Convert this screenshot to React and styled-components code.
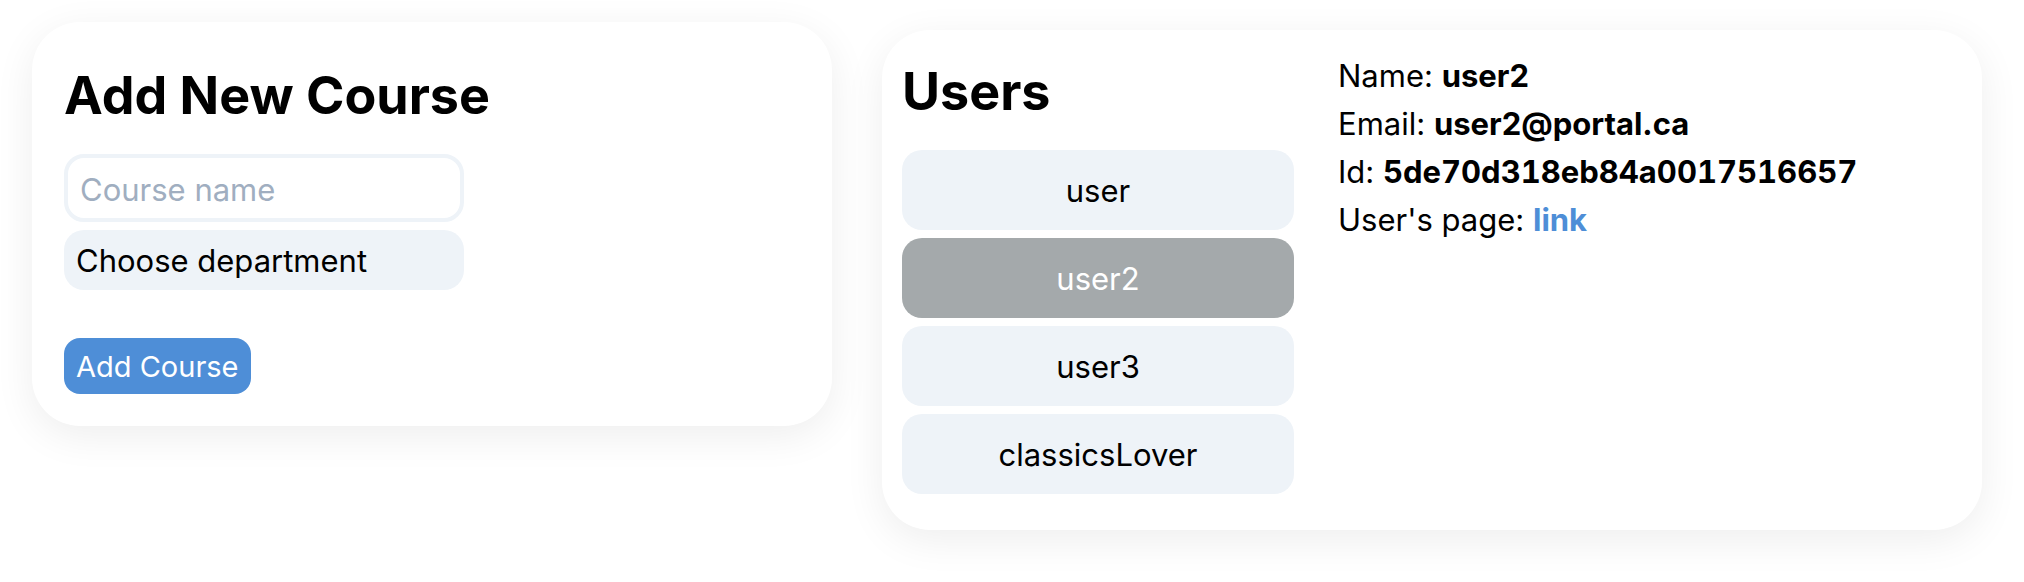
import React, { useState } from "react";
import styled, { createGlobalStyle } from "styled-components";

const Global = createGlobalStyle`
  *, *::before, *::after { box-sizing: border-box; }
  body {
    margin: 0;
    background: #fff;
    color: #000;
    font: 31px/48px Inter, "Liberation Sans", sans-serif;
  }
`;

const Page = styled.main`
  display: grid;
  grid-template-columns: minmax(0, 8fr) minmax(0, 11fr);
  align-items: start;
  gap: 50px;
  padding: 22px 42px 52px 32px;
`;

const Card = styled.section`
  background: #fff;
  border-radius: 48px;
  box-shadow: 0 10px 40px rgba(0, 0, 0, 0.07);
`;

const CourseCard = styled(Card)`
  padding: 34px 32px 32px;
`;

const UsersCard = styled(Card)`
  display: flex;
  gap: 44px;
  margin-top: 8px;
  padding: 22px 20px 36px;
`;

const Title = styled.h1`
  margin: 0 0 18px;
  font-size: 52px;
  line-height: 80px;
  font-weight: 700;
`;

const CourseForm = styled.form`
  display: flex;
  flex-direction: column;
  align-items: flex-start;
  gap: 8px;
`;

const TextField = styled.input`
  width: 400px;
  max-width: 100%;
  height: 68px;
  padding: 2px 12px 0;
  border: 4px solid #eef3f8;
  border-radius: 20px;
  font: inherit;
  &::placeholder { color: #a0aec0; opacity: 1; }
`;

const Select = styled.select`
  appearance: none;
  width: 400px;
  max-width: 100%;
  height: 60px;
  padding: 2px 12px 0;
  border: 0;
  border-radius: 20px;
  background: #eef3f8;
  color: #000;
  font: inherit;
`;

const SubmitButton = styled.button`
  height: 56px;
  margin-top: 40px;
  padding: 2px 12px 0;
  border: 0;
  border-radius: 16px;
  background: #4e8ed7;
  color: #fff;
  font: inherit;
  font-size: 29px;
`;

const UserColumn = styled.div`
  flex: 0 0 392px;
`;

const UserList = styled.div`
  display: flex;
  flex-direction: column;
  gap: 8px;
`;

const UserButton = styled.button`
  height: 80px;
  padding: 2px 12px 0;
  border: 0;
  border-radius: 20px;
  background: ${({ $active }) => ($active ? "#a4a9ab" : "#eef3f8")};
  color: ${({ $active }) => ($active ? "#fff" : "#000")};
  font: inherit;
`;

const Details = styled.div`
  min-width: 0;
`;

const UserId = styled.strong`
  font-variant-numeric: tabular-nums;
`;

const Link = styled.a`
  color: #4e8ed7;
  font-weight: 700;
  text-decoration: none;
`;

const users = ["user", "user2", "user3", "classicsLover"];

export default function App() {
  const [selected, setSelected] = useState("user2");
  return (
    <>
      <Global />
      <Page>
        <CourseCard>
          <Title>Add New Course</Title>
          <CourseForm onSubmit={(e) => e.preventDefault()}>
            <TextField aria-label="Course name" placeholder="Course name" />
            <Select aria-label="Department">
              <option>Choose department</option>
            </Select>
            <SubmitButton type="submit">Add Course</SubmitButton>
          </CourseForm>
        </CourseCard>
        <UsersCard>
          <UserColumn>
            <Title>Users</Title>
            <UserList>
              {users.map((name) => (
                <UserButton
                  key={name}
                  type="button"
                  aria-pressed={name === selected}
                  $active={name === selected}
                  onClick={() => setSelected(name)}
                >
                  {name}
                </UserButton>
              ))}
            </UserList>
          </UserColumn>
          <Details>
            <div>Name: <strong>{selected}</strong></div>
            <div>Email: <strong>{selected}@portal.ca</strong></div>
            <div>Id: <UserId>5de70d318eb84a0017516657</UserId></div>
            <div>User's page: <Link href={`#${selected}`}>link</Link></div>
          </Details>
        </UsersCard>
      </Page>
    </>
  );
}
